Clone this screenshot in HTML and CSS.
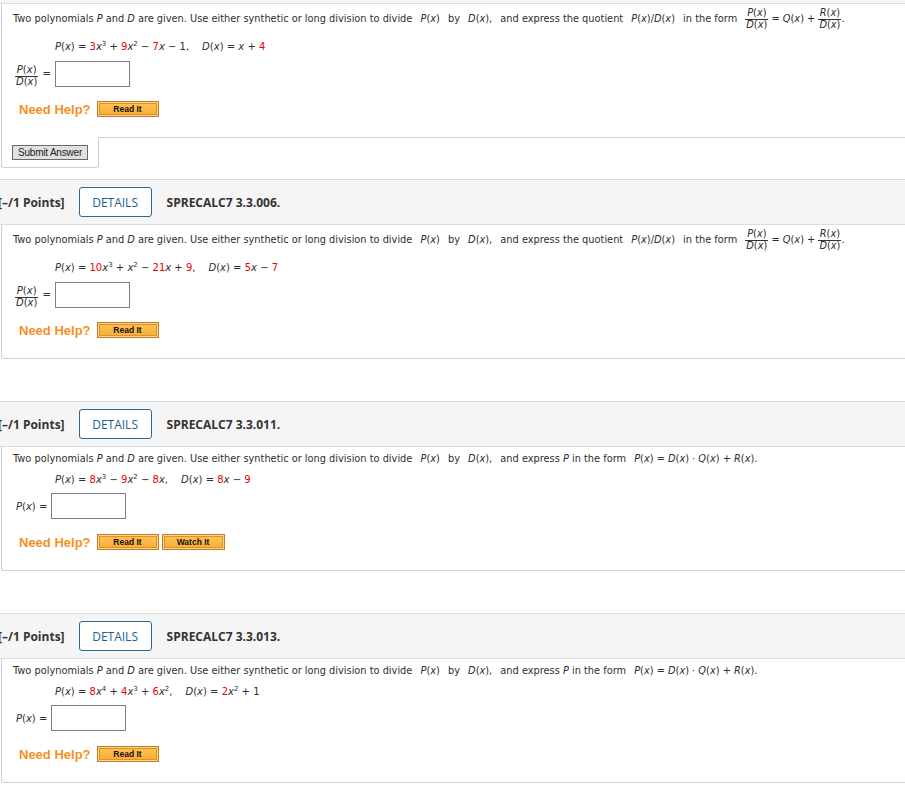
FILE: index.html
```html
<!DOCTYPE html>
<html>
<head>
<meta charset="utf-8">
<link rel="stylesheet" href="styles.css">
</head>
<body>
<div class="page">
  <div class="cut-head"></div>

  <section class="q q-first">
    <div class="card card-open">
      <p class="stem stem-tall">Two polynomials <i>P</i> and <i>D</i> are given. Use either synthetic or long division to divide <span class="m"><i>P</i>(<i>x</i>)</span> by <span class="m"><i>D</i>(<i>x</i>),</span> and express the quotient <span class="m"><i>P</i>(<i>x</i>)/<i>D</i>(<i>x</i>)</span> in the form <span class="m"><span class="frac"><span class="num"><i>P</i>(<i>x</i>)</span><span class="den"><i>D</i>(<i>x</i>)</span></span> = <i>Q</i>(<i>x</i>) + <span class="frac"><span class="num"><i>R</i>(<i>x</i>)</span><span class="den"><i>D</i>(<i>x</i>)</span></span>.</span></p>
      <p class="poly poly-tall"><i>P</i>(<i>x</i>) = <b class="r">3</b><i>x</i><sup>3</sup> + <b class="r">9</b><i>x</i><sup>2</sup> − <b class="r">7</b><i>x</i> − 1,<span class="dpart"><i>D</i>(<i>x</i>) = <i>x</i> + <b class="r">4</b></span></p>
      <div class="answer answer-frac">
        <span class="frac frac-label"><span class="num"><i>P</i>(<i>x</i>)</span><span class="den"><i>D</i>(<i>x</i>)</span></span>
        <span class="eq">=</span>
        <span class="box"></span>
      </div>
      <div class="help"><span class="need">Need Help?</span><span class="btn">Read It</span></div>
    </div>
    <div class="submit-row">
      <div class="submit-tab"><span class="submit">Submit Answer</span></div>
      <div class="submit-fill"></div>
    </div>
  </section>

  <section class="q">
    <div class="qhead"><span class="pts">[–/1 Points]</span><span class="details">DETAILS</span><span class="code">SPRECALC7 3.3.006.</span></div>
    <div class="card">
      <p class="stem stem-tall">Two polynomials <i>P</i> and <i>D</i> are given. Use either synthetic or long division to divide <span class="m"><i>P</i>(<i>x</i>)</span> by <span class="m"><i>D</i>(<i>x</i>),</span> and express the quotient <span class="m"><i>P</i>(<i>x</i>)/<i>D</i>(<i>x</i>)</span> in the form <span class="m"><span class="frac"><span class="num"><i>P</i>(<i>x</i>)</span><span class="den"><i>D</i>(<i>x</i>)</span></span> = <i>Q</i>(<i>x</i>) + <span class="frac"><span class="num"><i>R</i>(<i>x</i>)</span><span class="den"><i>D</i>(<i>x</i>)</span></span>.</span></p>
      <p class="poly poly-tall"><i>P</i>(<i>x</i>) = <b class="r">10</b><i>x</i><sup>3</sup> + <i>x</i><sup>2</sup> − <b class="r">21</b><i>x</i> + <b class="r">9</b>,<span class="dpart"><i>D</i>(<i>x</i>) = <b class="r">5</b><i>x</i> − <b class="r">7</b></span></p>
      <div class="answer answer-frac">
        <span class="frac frac-label"><span class="num"><i>P</i>(<i>x</i>)</span><span class="den"><i>D</i>(<i>x</i>)</span></span>
        <span class="eq">=</span>
        <span class="box"></span>
      </div>
      <div class="help"><span class="need">Need Help?</span><span class="btn">Read It</span></div>
    </div>
  </section>

  <section class="q">
    <div class="qhead"><span class="pts">[–/1 Points]</span><span class="details">DETAILS</span><span class="code">SPRECALC7 3.3.011.</span></div>
    <div class="card card-short">
      <p class="stem">Two polynomials <i>P</i> and <i>D</i> are given. Use either synthetic or long division to divide <span class="m"><i>P</i>(<i>x</i>)</span> by <span class="m"><i>D</i>(<i>x</i>),</span> and express <i>P</i> in the form <span class="m"><i>P</i>(<i>x</i>) = <i>D</i>(<i>x</i>) · <i>Q</i>(<i>x</i>) + <i>R</i>(<i>x</i>).</span></p>
      <p class="poly"><i>P</i>(<i>x</i>) = <b class="r">8</b><i>x</i><sup>3</sup> − <b class="r">9</b><i>x</i><sup>2</sup> − <b class="r">8</b><i>x</i>,<span class="dpart"><i>D</i>(<i>x</i>) = <b class="r">8</b><i>x</i> − <b class="r">9</b></span></p>
      <div class="answer answer-px">
        <span class="plabel"><i>P</i>(<i>x</i>) =</span>
        <span class="box"></span>
      </div>
      <div class="help"><span class="need">Need Help?</span><span class="btn">Read It</span><span class="btn btn-watch">Watch It</span></div>
    </div>
  </section>

  <section class="q">
    <div class="qhead"><span class="pts">[–/1 Points]</span><span class="details">DETAILS</span><span class="code">SPRECALC7 3.3.013.</span></div>
    <div class="card card-short">
      <p class="stem">Two polynomials <i>P</i> and <i>D</i> are given. Use either synthetic or long division to divide <span class="m"><i>P</i>(<i>x</i>)</span> by <span class="m"><i>D</i>(<i>x</i>),</span> and express <i>P</i> in the form <span class="m"><i>P</i>(<i>x</i>) = <i>D</i>(<i>x</i>) · <i>Q</i>(<i>x</i>) + <i>R</i>(<i>x</i>).</span></p>
      <p class="poly"><i>P</i>(<i>x</i>) = <b class="r">8</b><i>x</i><sup>4</sup> + <b class="r">4</b><i>x</i><sup>3</sup> + <b class="r">6</b><i>x</i><sup>2</sup>,<span class="dpart"><i>D</i>(<i>x</i>) = <b class="r">2</b><i>x</i><sup>2</sup> + 1</span></p>
      <div class="answer answer-px">
        <span class="plabel"><i>P</i>(<i>x</i>) =</span>
        <span class="box"></span>
      </div>
      <div class="help"><span class="need">Need Help?</span><span class="btn">Read It</span></div>
    </div>
  </section>
</div>
</body>
</html>
```

FILE: styles.css
```css
html, body {
  margin: 0;
  padding: 0;
  background: #fff;
  overflow: hidden;
}
.page {
  width: 905px;
  font-family: "DejaVu Sans", Verdana, sans-serif;
  font-size: 10px;
  color: #2e2e2e;
}
p { margin: 0; }
i { font-style: italic; }
b.r { font-weight: normal; color: #ee0000; }
sup {
  font-size: 7px;
  line-height: 0;
  vertical-align: 4px;
}

.cut-head {
  height: 3px;
  background: #f5f5f5;
  border-bottom: 1px solid #dcdcdc;
}

.q { margin-bottom: 42px; }
.q-first { margin-bottom: 12px; }

.qhead {
  height: 44px;
  border-top: 1px solid #dcdcdc;
  border-bottom: 1px solid #dcdcdc;
  background: #f5f5f5;
  display: flex;
  align-items: center;
  font-family: "Open Sans", sans-serif;
  color: #333;
}
.pts {
  font-weight: 700;
  font-size: 12px;
  margin-left: -2px;
}
.details {
  margin-left: 14px;
  box-sizing: border-box;
  height: 30px;
  width: 73px;
  border: 1px solid #2b6a98;
  border-radius: 3px;
  background: #fff;
  color: #1d5f8f;
  font-size: 12px;
  display: flex;
  align-items: center;
  justify-content: center;
}
.code {
  margin-left: 15px;
  font-weight: 700;
  font-size: 12px;
}

.card {
  margin-left: 1px;
  border-left: 1px solid #cfcfcf;
  border-bottom: 1px solid #cfcfcf;
  border-bottom-left-radius: 3px;
  padding: 3px 0 20px 11px;
}
.card-open {
  border-bottom: none;
  border-bottom-left-radius: 0;
}
.card-short { padding-top: 5px; padding-bottom: 20px; }

.stem { line-height: 14px; white-space: nowrap; font-size: 9.8px; }
.stem-tall { line-height: 24px; height: 24px; }
.m { margin: 0 5px; }

.frac {
  display: inline-flex;
  flex-direction: column;
  align-items: stretch;
  text-align: center;
  vertical-align: middle;
  line-height: 10px;
}
.num {
  border-bottom: 1px solid #333;
  padding: 0 1px 1px;
}
.den { padding: 0 1px; }

.poly {
  margin-left: 42px;
  margin-top: 7px;
  line-height: 14px;
  white-space: nowrap;
}
.poly-tall { margin-top: 9px; }
.dpart { margin-left: 13px; }

.answer {
  margin-top: 6px;
  display: flex;
  align-items: flex-end;
  height: 26px;
}
.answer-frac { margin-top: 7px; }
.box {
  box-sizing: border-box;
  width: 75px;
  height: 26px;
  border: 1px solid #7f7f7f;
  background: #fff;
}
.answer-frac .frac-label { margin-left: 2px; }
.eq { margin: 0 4px 6px 4px; line-height: 14px; }
.answer-px { align-items: center; }
.plabel { margin-left: 3px; margin-right: 4px; }

.help {
  margin-top: 14px;
  height: 16px;
  display: flex;
  align-items: center;
}
.card-short .help { margin-top: 15px; }
.need {
  margin-left: 6px;
  font-family: "Liberation Sans", Arial, sans-serif;
  font-weight: 700;
  font-size: 13px;
  color: #f5901e;
  margin-right: 6px;
}
.btn {
  box-sizing: border-box;
  width: 62px;
  height: 16px;
  border: 1px solid #c97a2c;
  box-shadow: inset 0 0 0 1px #fcd27a, inset 0 0 0 2px #d99234;
  background: linear-gradient(#ffc655, #f9ab35);
  font-family: "Liberation Sans", Arial, sans-serif;
  font-weight: 700;
  font-size: 8.5px;
  color: #111;
  display: flex;
  align-items: center;
  justify-content: center;
}
.btn-watch { margin-left: 3px; width: 63px; }

.submit-row {
  display: flex;
  height: 30px;
  margin-left: 1px;
}
.submit-tab {
  box-sizing: border-box;
  width: 98px;
  height: 31px;
  border: 1px solid #cfcfcf;
  border-top: none;
  border-radius: 0 0 3px 3px;
  padding: 8px 0 0 10px;
}
.submit-fill {
  flex: 1;
  border-top: 1px solid #cfcfcf;
}
.submit {
  box-sizing: border-box;
  display: flex;
  align-items: center;
  justify-content: center;
  width: 76px;
  height: 15px;
  border: 1px solid #6a6a6a;
  background: #e1e1e1;
  font-family: "Liberation Sans", Arial, sans-serif;
  font-size: 10px;
  letter-spacing: -0.2px;
  color: #222;
}
```
